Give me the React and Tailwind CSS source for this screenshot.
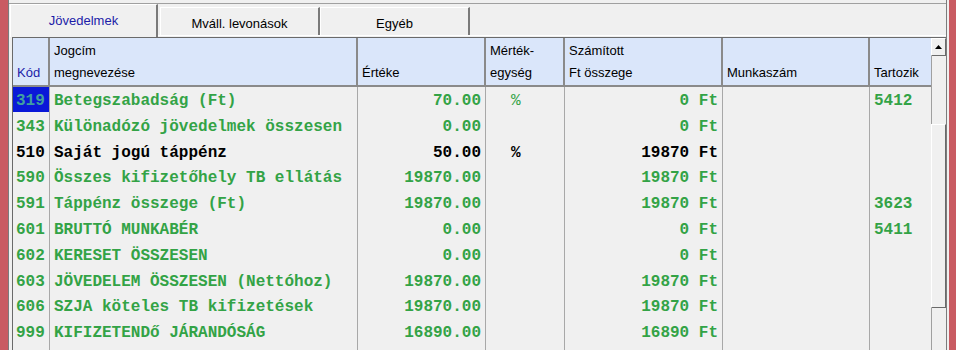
import React from "react";

const rows = [
  { code: "319", name: "Betegszabadság (Ft)", val: "70.00", unit: "%", calc: "0", tart: "5412", sel: true },
  { code: "343", name: "Különadózó jövedelmek összesen", val: "0.00", unit: "", calc: "0", tart: "" },
  { code: "510", name: "Saját jogú táppénz", val: "50.00", unit: "%", calc: "19870", tart: "", black: true },
  { code: "590", name: "Összes kifizetőhely TB ellátás", val: "19870.00", unit: "", calc: "19870", tart: "" },
  { code: "591", name: "Táppénz összege (Ft)", val: "19870.00", unit: "", calc: "19870", tart: "3623" },
  { code: "601", name: "BRUTTÓ MUNKABÉR", val: "0.00", unit: "", calc: "0", tart: "5411" },
  { code: "602", name: "KERESET ÖSSZESEN", val: "0.00", unit: "", calc: "0", tart: "" },
  { code: "603", name: "JÖVEDELEM ÖSSZESEN (Nettóhoz)", val: "19870.00", unit: "", calc: "19870", tart: "" },
  { code: "606", name: "SZJA köteles TB kifizetések", val: "19870.00", unit: "", calc: "19870", tart: "" },
  { code: "999", name: "KIFIZETENDő JÁRANDÓSÁG", val: "16890.00", unit: "", calc: "16890", tart: "" },
  { code: "", name: "", val: "", unit: "", calc: "", tart: "", empty: true },
];

function HeaderCell({ w, l1, l2, blue }) {
  return (
    <div className={`${w} h-full shrink-0 border-r-2 border-[#8a8a8a] pl-[4px] pt-[2px] leading-[22px] ${blue ? "text-[#1c1ca8]" : "text-black"}`}>
      <div className="h-[22px] whitespace-nowrap">{l1}</div>
      <div className="h-[22px] whitespace-nowrap">{l2}</div>
    </div>
  );
}

function Row({ r }) {
  const color = r.black ? "text-[#000000]" : "text-[#33a346]";
  return (
    <div className={`flex h-[25.8px] shrink-0 leading-[21.8px] ${color}`}>
      <div className="w-[37px] shrink-0 border-r border-[#a8a8a8] h-full">
        {r.sel ? (
          <div className="w-[36px] h-[25px] bg-[#0a18d8] text-[#40a0a0] pl-[3px] pt-[4px]">{r.code}</div>
        ) : (
          <div className="pl-[3px] pt-[4px]">{r.code}</div>
        )}
      </div>
      <div className="w-[308px] shrink-0 border-r border-[#a8a8a8] pl-[4px] pt-[4px] whitespace-nowrap overflow-hidden">{r.name}</div>
      <div className="w-[128px] shrink-0 border-r border-[#a8a8a8] pr-[4px] pt-[4px] text-right">{r.val}</div>
      <div className={`w-[79px] shrink-0 border-r border-[#a8a8a8] pl-[25px] pt-[4px] ${r.sel ? "font-normal" : ""}`}>{r.unit}</div>
      <div className="w-[158px] shrink-0 border-r border-[#a8a8a8] pr-[4px] pt-[4px] text-right whitespace-pre">{r.empty ? "" : `${r.calc} Ft`}</div>
      <div className="w-[147px] shrink-0 border-r border-[#a8a8a8]"></div>
      <div className="w-[61px] shrink-0 pl-[4px] pt-[4px]">{r.tart}</div>
    </div>
  );
}

export default function App() {
  return (
    <div className="w-[956px] h-[350px] flex overflow-hidden bg-[#f0f0f0] font-['Liberation_Sans',Arial,sans-serif] text-[13px]">
      <div className="w-[8px] shrink-0 bg-[#c95b62]" />
      <div className="w-[939px] shrink-0 flex flex-col border-l border-r border-[#7c7c7c]">
        <div className="h-[3px] shrink-0" />
        <div className="border-t border-[#a0a0a0] flex flex-col flex-1 min-h-0">
          {/* tabs */}
          <div className="flex h-[33px] shrink-0 pl-[1px]">
            <div className="w-[148px] h-[33px] shrink-0 border-l border-t border-white border-r-2 border-r-[#7a7a7a] text-center text-[#1c1ca8] pt-[8px] leading-[16px]">
              Jövedelmek
            </div>
            <div className="flex-1 flex flex-col">
              <div className="h-[3px]" />
              <div className="flex h-[28px] pl-[2px]">
                <div className="w-[160px] h-[28px] shrink-0 border-l border-t border-white border-r-2 border-r-[#7a7a7a] text-center text-black pt-[8px] leading-[16px]">
                  Mváll. levonások
                </div>
                <div className="w-[150px] h-[28px] shrink-0 border-l border-t border-white border-r-2 border-r-[#7a7a7a] text-center text-black pt-[8px] leading-[16px]">
                  Egyéb
                </div>
              </div>
              <div className="h-[1px] bg-white" />
              <div className="h-[1px]" />
            </div>
          </div>
          {/* grid */}
          <div className="ml-[3px] w-[934px] flex-1 min-h-0 flex border-l border-t border-[#6a6a6a] overflow-hidden">
            <div className="w-[918px] shrink-0 flex flex-col">
              <div className="flex h-[49px] shrink-0 bg-[#dae6fa] border-b-2 border-[#8a8a8a]">
                <HeaderCell w="w-[37px]" l1="" l2="Kód" blue />
                <HeaderCell w="w-[308px]" l1="Jogcím" l2="megnevezése" />
                <HeaderCell w="w-[128px]" l1="" l2="Értéke" />
                <HeaderCell w="w-[79px]" l1="Mérték-" l2="egység" />
                <HeaderCell w="w-[158px]" l1="Számított" l2="Ft összege" />
                <HeaderCell w="w-[147px]" l1="" l2="Munkaszám" />
                <div className="w-[61px] h-full shrink-0 pl-[4px] pt-[2px] leading-[22px]">
                  <div className="h-[22px]" />
                  <div className="h-[22px]">Tartozik</div>
                </div>
              </div>
              <div className="flex flex-col font-['Liberation_Mono','Courier_New',monospace] font-bold text-[16px]">
                {rows.map((r, i) => (
                  <Row key={i} r={r} />
                ))}
              </div>
            </div>
            {/* scrollbar */}
            <div className="w-[15px] shrink-0 flex flex-col">
              <div className="h-[18px] shrink-0 border-t border-l border-white border-r border-b border-r-[#6a6a6a] border-b-[#6a6a6a] bg-[#f0f0f0] flex items-center justify-center">
                <svg width="7" height="4" viewBox="0 0 7 4">
                  <polygon points="3.5,0 7,4 0,4" fill="#000" />
                </svg>
              </div>
              <div className="h-[68px] shrink-0 border-l border-[#a0a0a0]" />
              <div className="h-[184px] shrink-0 border-t border-l border-white border-r border-b border-r-[#6a6a6a] border-b-[#6a6a6a]" />
              <div className="flex-1 border-l border-[#a0a0a0]" />
            </div>
          </div>
        </div>
      </div>
      <div className="w-[2px] shrink-0" />
      <div className="flex-1 bg-[#c95b62]" />
    </div>
  );
}
